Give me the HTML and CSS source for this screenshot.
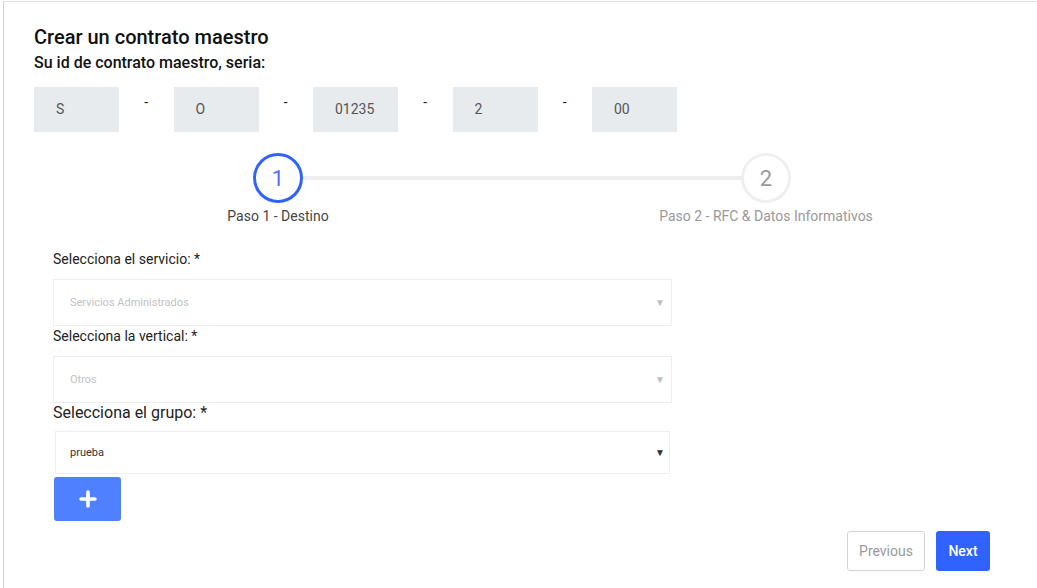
FILE: index.html
```html
<!DOCTYPE html>
<html lang="es">
<head>
<meta charset="utf-8">
<title>Crear un contrato maestro</title>
<link rel="stylesheet" href="styles.css">
</head>
<body>
<div class="page">
  <h1 class="title">Crear un contrato maestro</h1>
  <h2 class="subtitle">Su id de contrato maestro, seria:</h2>
  <div class="id-row">
    <div class="id-box">S</div><span class="dash">-</span>
    <div class="id-box">O</div><span class="dash">-</span>
    <div class="id-box">01235</div><span class="dash">-</span>
    <div class="id-box">2</div><span class="dash">-</span>
    <div class="id-box">00</div>
  </div>
  <div class="stepper">
    <div class="step active">
      <div class="circle">1</div>
      <div class="step-label">Paso 1 - Destino</div>
    </div>
    <div class="step">
      <div class="circle">2</div>
      <div class="step-label">Paso 2 - RFC &amp; Datos Informativos</div>
    </div>
  </div>
  <div class="form">
    <label class="label">Selecciona el servicio: *</label>
    <div class="select disabled"><span>Servicios Administrados</span><span class="arrow">&#9660;</span></div>
    <label class="label">Selecciona la vertical: *</label>
    <div class="select disabled"><span>Otros</span><span class="arrow">&#9660;</span></div>
    <label class="label big">Selecciona el grupo: *</label>
    <div class="select active-select"><span>prueba</span><span class="arrow">&#9660;</span></div>
    <button class="add-btn" type="button" aria-label="Agregar">
      <svg width="18" height="18" viewBox="0 0 18 18"><path d="M9 2v14M2 9h14" stroke="#fff" stroke-width="3.6" stroke-linecap="round"/></svg>
    </button>
    <div class="nav">
      <button class="btn prev" type="button">Previous</button>
      <button class="btn next" type="button">Next</button>
    </div>
  </div>
</div>
</body>
</html>
```
FILE: styles.css
```css
* { box-sizing: border-box; }
html, body { margin: 0; padding: 0; background: #fff; }
body { font-family: Roboto, "Noto Sans", Arial, sans-serif; color: #222; }

.page {
  margin: 1px 0 0 3px;
  min-height: 587px;
  border-top: 1px solid #e2e2e2;
  border-left: 1px solid #cfcfcf;
  padding: 23px 27px 0 30px;
}

.title {
  margin: 0;
  font-size: 20px;
  line-height: 24px;
  font-weight: 500;
  color: #111;
}
.subtitle {
  margin: 4px 0 0;
  font-size: 16px;
  line-height: 20px;
  font-weight: 500;
  color: #111;
}

.id-row {
  display: flex;
  align-items: flex-start;
  margin-top: 14px;
}
.id-box {
  width: 85px;
  height: 45px;
  background: #e8ebee;
  color: #555;
  font-size: 14px;
  line-height: 45px;
  padding-left: 22px;
}
.dash {
  width: 54.5px;
  text-align: center;
  font-size: 14px;
  line-height: 20px;
  margin-top: 5px;
  color: #222;
}

.stepper {
  display: flex;
  margin-top: 21px;
}
.step {
  flex: 1;
  position: relative;
  display: flex;
  flex-direction: column;
  align-items: center;
}
.step + .step::before {
  content: "";
  position: absolute;
  top: 23px;
  left: -50%;
  right: 50%;
  height: 4px;
  background: #efefef;
  z-index: 0;
}
.circle {
  position: relative;
  z-index: 1;
  width: 50px;
  height: 50px;
  border-radius: 50%;
  border: 3px solid #efefef;
  background: #fff;
  color: #9a9a9a;
  font-size: 22px;
  display: flex;
  align-items: center;
  justify-content: center;
}
.step.active .circle {
  border-color: #2f62ff;
  color: #5a6cf0;
}
.step-label {
  margin-top: 5px;
  font-size: 14px;
  line-height: 16px;
  color: #999;
}
.step.active .step-label { color: #444; }

.form {
  padding: 25px 20px 0 19px;
  display: flex;
  flex-direction: column;
  align-items: flex-start;
}
.label {
  font-size: 14px;
  line-height: 20px;
  color: #222;
  margin-bottom: 10px;
}
.label.big {
  font-size: 16px;
  line-height: 20px;
  margin-bottom: 8px;
}
.select {
  width: 619px;
  height: 47px;
  border: 1px solid #eeeeee;
  display: flex;
  align-items: center;
  justify-content: space-between;
  padding: 0 6px 0 16px;
  font-size: 11px;
  color: #c2c2c2;
}
.select .arrow { font-size: 10px; color: #c0c0c0; }
.select.active-select {
  width: 615px;
  height: 43px;
  margin-left: 2px;
  color: #333;
  padding: 0 4px 0 14px;
}
.select.active-select .arrow { color: #333; }

.add-btn {
  margin-top: 3px;
  margin-left: 1px;
  width: 67px;
  height: 44px;
  border: none;
  border-radius: 3px;
  background: #4f80ff;
  display: flex;
  align-items: center;
  justify-content: center;
  padding: 0;
}

.nav {
  align-self: flex-end;
  display: flex;
  gap: 11px;
  margin-top: 10px;
}
.btn {
  height: 40px;
  border-radius: 3px;
  font-family: Roboto, "Noto Sans", Arial, sans-serif;
  font-size: 14px;
  padding: 0;
}
.btn.prev {
  width: 78px;
  border: 1px solid #d2d2d2;
  background: #fff;
  color: #9a9a9a;
}
.btn.next {
  width: 54px;
  border: none;
  background: #2f62ff;
  color: #fff;
  font-weight: 500;
}
```
